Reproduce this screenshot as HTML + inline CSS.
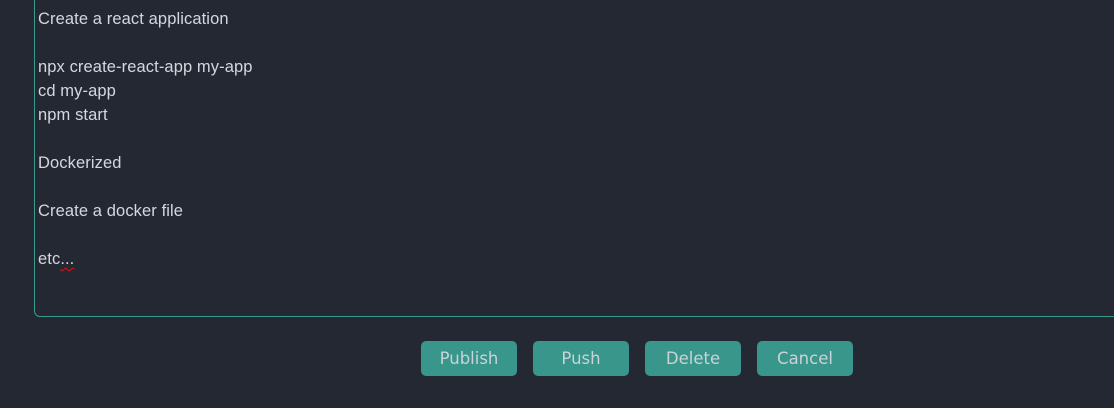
<!DOCTYPE html>
<html><head><style>
html,body{margin:0;padding:0;width:1114px;height:408px;overflow:hidden;background:#242833;}
.ta{position:absolute;left:34px;top:-20px;width:1100px;height:337px;border:1px solid #3a9a8e;border-radius:6px;box-sizing:border-box;}
.txt{position:absolute;left:38px;top:7px;font-family:"Liberation Sans",sans-serif;font-size:16.5px;line-height:24px;color:#d4d8de;white-space:pre;letter-spacing:0.1px;}
.sq{text-decoration:underline wavy #e01010;text-decoration-thickness:1px;text-underline-offset:3px;}
.btn{position:absolute;top:341px;width:96px;height:35px;background:#38968a;border-radius:5px;color:#c9d3d8;font-family:"DejaVu Sans","Liberation Sans",sans-serif;font-size:16.5px;line-height:35px;text-align:center;}
</style></head><body>
<div class="ta"></div>
<div class="txt">Create a react application

npx create-react-app my-app
cd my-app
npm start

Dockerized

Create a docker file

etc<span class="sq">...</span></div>
<div class="btn" style="left:421px">Publish</div>
<div class="btn" style="left:533px">Push</div>
<div class="btn" style="left:645px">Delete</div>
<div class="btn" style="left:757px">Cancel</div>
</body></html>
